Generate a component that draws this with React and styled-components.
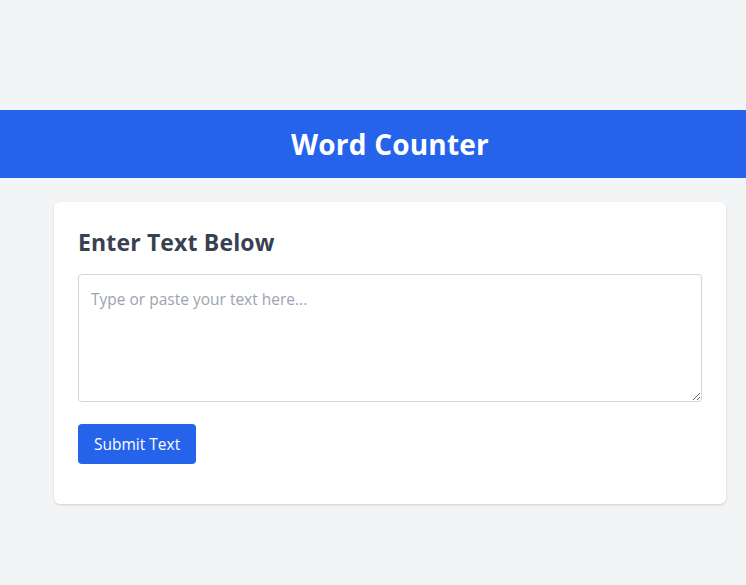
import React, { useState } from 'react';
import styled, { createGlobalStyle } from 'styled-components';

const GlobalStyle = createGlobalStyle`
  html, body {
    margin: 0;
    padding: 0;
    background: #f3f4f6;
    overflow-x: hidden;
  }
  body {
    font-family: "Open Sans", "Noto Sans", sans-serif;
  }
  * {
    box-sizing: border-box;
  }
`;

export default function App() {
  const [text, setText] = useState('');

  const handleSubmit = (e) => {
    e.preventDefault();
  };

  return (
    <>
      <GlobalStyle />
      <StPage>
        <StHeader>
          <StTitle>Word Counter</StTitle>
        </StHeader>
        <StMain>
          <StCard onSubmit={handleSubmit}>
            <StHeading>Enter Text Below</StHeading>
            <StTextArea
              value={text}
              onChange={(e) => setText(e.target.value)}
              placeholder="Type or paste your text here..."
            />
            <StButton type="submit">Submit Text</StButton>
          </StCard>
        </StMain>
      </StPage>
    </>
  );
}

const StPage = styled.div`
  width: 780px;
  min-height: 585px;
  padding-top: 110px;
`;

const StHeader = styled.header`
  background-color: #2563eb;
  height: 68px;
  display: flex;
  justify-content: center;
  align-items: center;
`;

const StTitle = styled.h1`
  margin: 0;
  color: #ffffff;
  font-size: 28px;
  font-weight: 700;
  letter-spacing: 0.2px;
`;

const StMain = styled.main`
  width: 672px;
  margin: 24px auto 0 auto;
`;

const StCard = styled.form`
  background-color: #ffffff;
  border-radius: 6px;
  box-shadow: 0 1px 3px rgba(0, 0, 0, 0.1), 0 1px 2px rgba(0, 0, 0, 0.06);
  padding: 24px 24px 40px 24px;
  display: flex;
  flex-direction: column;
  align-items: flex-start;
`;

const StHeading = styled.h2`
  margin: 0 0 16px 0;
  color: #374151;
  font-size: 23px;
  line-height: 32px;
  font-weight: 700;
  letter-spacing: 0.15px;
`;

const StTextArea = styled.textarea`
  width: 100%;
  height: 128px;
  border: 1px solid #d1d5db;
  border-radius: 4px;
  padding: 12px;
  font-family: inherit;
  font-size: 15.5px;
  line-height: 24px;
  color: #374151;
  resize: vertical;
  outline: none;

  &::placeholder {
    color: #9ca3af;
  }
`;

const StButton = styled.button`
  margin-top: 22px;
  height: 40px;
  padding: 0 16px;
  background-color: #2563eb;
  color: #ffffff;
  border: none;
  border-radius: 4px;
  font-family: inherit;
  font-size: 15.5px;
  cursor: pointer;
`;
